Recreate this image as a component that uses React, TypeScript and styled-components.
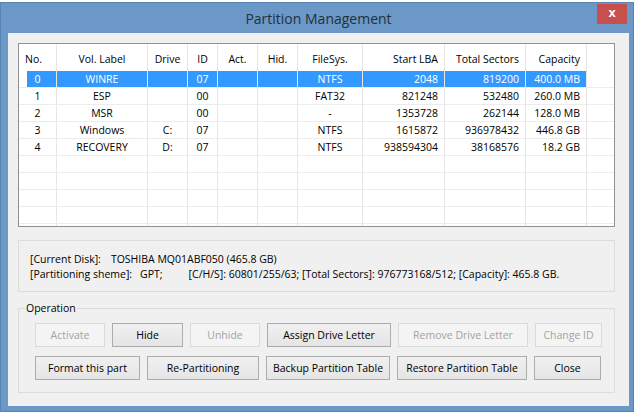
import React from 'react';
import styled, { createGlobalStyle, css } from 'styled-components';

const GlobalStyle = createGlobalStyle`
    html, body {
        margin: 0;
        padding: 0;
        background: #ffffff;
    }
    body {
        font-family: 'Open Sans', 'Liberation Sans', sans-serif;
        font-size: 10.5px;
        color: #000;
    }
`;

type Align = 'left' | 'center' | 'right';

const columns: { key: string; title: string; width: number; align: Align; headAlign?: Align }[] = [
    { key: 'no', title: 'No.', width: 38, align: 'center', headAlign: 'left' },
    { key: 'label', title: 'Vol. Label', width: 91, align: 'center' },
    { key: 'drive', title: 'Drive', width: 40, align: 'center' },
    { key: 'id', title: 'ID', width: 30, align: 'center' },
    { key: 'act', title: 'Act.', width: 40, align: 'center' },
    { key: 'hid', title: 'Hid.', width: 40, align: 'center' },
    { key: 'fs', title: 'FileSys.', width: 65, align: 'center' },
    { key: 'start', title: 'Start LBA', width: 82, align: 'right' },
    { key: 'total', title: 'Total Sectors', width: 81, align: 'right' },
    { key: 'cap', title: 'Capacity', width: 61, align: 'right' },
];

const partitions: Record<string, string>[] = [
    { no: '0', label: 'WINRE', drive: '', id: '07', act: '', hid: '', fs: 'NTFS', start: '2048', total: '819200', cap: '400.0 MB' },
    { no: '1', label: 'ESP', drive: '', id: '00', act: '', hid: '', fs: 'FAT32', start: '821248', total: '532480', cap: '260.0 MB' },
    { no: '2', label: 'MSR', drive: '', id: '00', act: '', hid: '', fs: '-', start: '1353728', total: '262144', cap: '128.0 MB' },
    { no: '3', label: 'Windows', drive: 'C:', id: '07', act: '', hid: '', fs: 'NTFS', start: '1615872', total: '936978432', cap: '446.8 GB' },
    { no: '4', label: 'RECOVERY', drive: 'D:', id: '07', act: '', hid: '', fs: 'NTFS', start: '938594304', total: '38168576', cap: '18.2 GB' },
];

const gridTemplate = `${columns.map((c) => `${c.width}px`).join(' ')} 1fr`;

const Window = styled.div`
    box-sizing: border-box;
    width: 634px;
    height: 410px;
    margin-top: 2px;
    background: #6b98c6;
    border: 1px solid #5884b3;
    display: flex;
    flex-direction: column;
    padding: 0 4px 5px 7px;
`;

const TitleBar = styled.div`
    height: 30px;
    display: grid;
    grid-template-columns: 1fr auto 1fr;
    align-items: start;
`;

const Title = styled.div`
    grid-column: 2;
    font-size: 14px;
    line-height: 31px;
    color: #22303f;
`;

const CloseButton = styled.div`
    grid-column: 3;
    justify-self: end;
    margin: 1px 2px 0 0;
    width: 30px;
    height: 20px;
    background: #c7504d;
    color: #fff;
    font-family: 'Liberation Sans', sans-serif;
    font-weight: bold;
    font-size: 13px;
    line-height: 18px;
    text-align: center;
`;

const Client = styled.div`
    flex: 1;
    background: #f0f0f0;
    padding: 10px 14px 0 10px;
    display: flex;
    flex-direction: column;
`;

const ListBox = styled.div`
    box-sizing: border-box;
    height: 184px;
    background: #fff;
    border: 1px solid #8e9297;
    overflow: hidden;
`;

const Row = styled.div<{ $header?: boolean }>`
    display: grid;
    grid-template-columns: ${gridTemplate};
    height: ${({ $header }) => ($header ? '27px' : '17px')};
`;

const Cell = styled.div<{ $align: Align; $selected?: boolean; $first?: boolean; $header?: boolean }>`
    box-sizing: border-box;
    border-right: 1px solid #e6e6e6;
    border-bottom: ${({ $header }) => ($header ? 'none' : '1px solid #ececec')};
    padding: ${({ $header }) => ($header ? '6px 6px 0' : '1px 6px 0')};
    line-height: ${({ $header }) => ($header ? '18px' : '15px')};
    text-align: ${({ $align }) => $align};
    white-space: nowrap;
    overflow: hidden;
    ${({ $selected, $first }) =>
        $selected &&
        css`
            color: #fff;
            background: ${$first ? 'linear-gradient(to right, #fff 8px, #3399ff 8px)' : '#3399ff'};
        `}
`;

const FillerCell = styled.div`
    border-bottom: 1px solid #ececec;
`;

const InfoBox = styled.div`
    box-sizing: border-box;
    margin-top: 13px;
    height: 52px;
    border: 1px solid #dcdcdc;
    padding: 11px 11px 0;
    line-height: 15px;
`;

const InfoLine = styled.div`
    white-space: nowrap;
`;

const InfoValue = styled.span<{ $gap: number }>`
    margin-left: ${({ $gap }) => $gap}px;
`;

const Group = styled.fieldset`
    margin: 9px 0 0;
    min-inline-size: 0;
    border: 1px solid #dcdcdc;
    padding: 7px 12px 12px 16px;
    display: flex;
    flex-direction: column;
    gap: 9px;
`;

const Legend = styled.legend`
    margin-left: -10px;
    padding: 0 1px;
    line-height: 15px;
`;

const ButtonRow = styled.div`
    display: flex;
    gap: 7px;
`;

const Button = styled.button<{ $width: number }>`
    box-sizing: border-box;
    width: ${({ $width }) => $width}px;
    height: 24px;
    padding: 0;
    font-family: 'Open Sans', 'Liberation Sans', sans-serif;
    font-size: 10.5px;
    color: #000;
    border: 1px solid #acacac;
    background: linear-gradient(#f0f0f0, #e5e5e5);
    &:disabled {
        color: #a3a3a3;
        border-color: #dadada;
        background: #f4f4f4;
    }
`;

const row1: [string, number, boolean][] = [
    ['Activate', 70, false],
    ['Hide', 71, true],
    ['Unhide', 70, false],
    ['Assign Drive Letter', 124, true],
    ['Remove Drive Letter', 130, false],
    ['Change ID', 67, false],
];

const row2: [string, number, boolean][] = [
    ['Format this part', 105, true],
    ['Re-Partitioning', 112, true],
    ['Backup Partition Table', 124, true],
    ['Restore Partition Table', 130, true],
    ['Close', 67, true],
];

export default function App() {
    const emptyRows = [0, 1, 2, 3, 4];
    return (
        <>
            <GlobalStyle />
            <Window>
                <TitleBar>
                    <Title>Partition Management</Title>
                    <CloseButton>x</CloseButton>
                </TitleBar>
                <Client>
                    <ListBox>
                        <Row $header>
                            {columns.map((c) => (
                                <Cell key={c.key} $header $align={c.headAlign ?? c.align}>
                                    {c.title}
                                </Cell>
                            ))}
                            <div />
                        </Row>
                        {partitions.map((p, i) => (
                            <Row key={p.no}>
                                {columns.map((c, ci) => (
                                    <Cell key={c.key} $align={c.align} $selected={i === 0} $first={ci === 0}>
                                        {p[c.key]}
                                    </Cell>
                                ))}
                                <FillerCell />
                            </Row>
                        ))}
                        {emptyRows.map((r) => (
                            <Row key={`empty-${r}`}>
                                {columns.map((c) => (
                                    <Cell key={c.key} $align={c.align} />
                                ))}
                                <FillerCell />
                            </Row>
                        ))}
                    </ListBox>
                    <InfoBox>
                        <InfoLine>
                            [Current Disk]:<InfoValue $gap={10}>TOSHIBA MQ01ABF050 (465.8 GB)</InfoValue>
                        </InfoLine>
                        <InfoLine>
                            [Partitioning sheme]:<InfoValue $gap={8}>GPT;</InfoValue>
                            <InfoValue $gap={26}>[C/H/S]: 60801/255/63; [Total Sectors]: 976773168/512; [Capacity]: 465.8 GB.</InfoValue>
                        </InfoLine>
                    </InfoBox>
                    <Group>
                        <Legend>Operation</Legend>
                        <ButtonRow>
                            {row1.map(([label, w, enabled]) => (
                                <Button key={label} $width={w} disabled={!enabled}>
                                    {label}
                                </Button>
                            ))}
                        </ButtonRow>
                        <ButtonRow>
                            {row2.map(([label, w, enabled]) => (
                                <Button key={label} $width={w} disabled={!enabled}>
                                    {label}
                                </Button>
                            ))}
                        </ButtonRow>
                    </Group>
                </Client>
            </Window>
        </>
    );
}
